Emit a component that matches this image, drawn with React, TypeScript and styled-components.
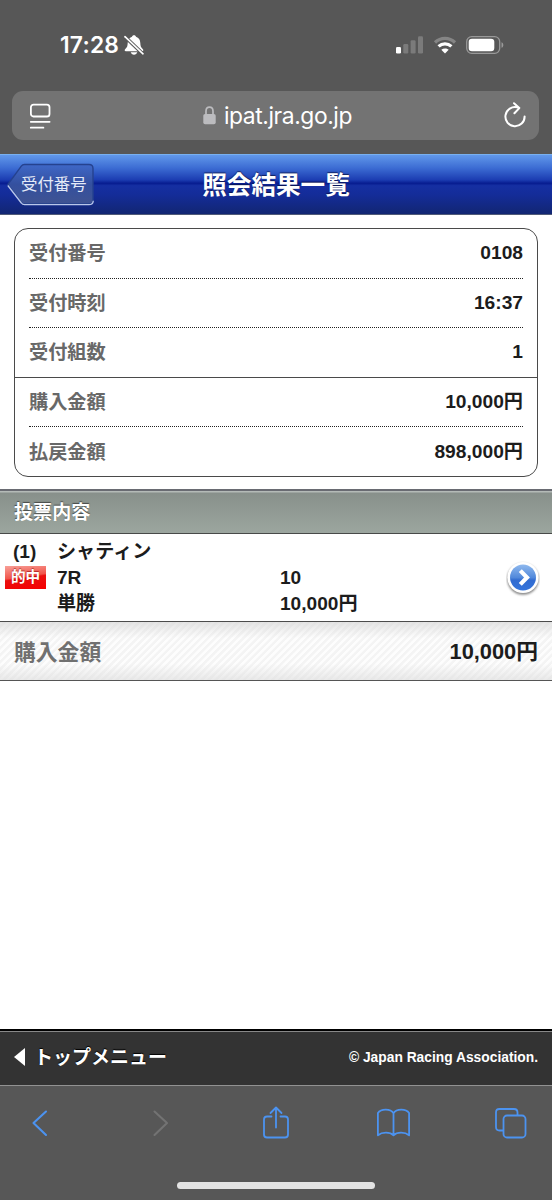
import React from 'react';
import styled, { createGlobalStyle } from 'styled-components';

const GlobalStyle = createGlobalStyle`
  * { box-sizing: border-box; }
  body {
    margin: 0;
    background: #575757;
    color: #1c1c1c;
    font-family: "Liberation Sans", "Noto Sans CJK JP", sans-serif;
    font-weight: 700;
  }
`;

const Screen = styled.div`
  width: 552px;
  height: 1200px;
  display: flex;
  flex-direction: column;
  overflow: hidden;
  background: #575757;
`;

const StatusBar = styled.div`
  height: 91px;
  padding: 0 48px 2px 60px;
  display: flex;
  align-items: center;
  justify-content: space-between;
`;

const StatusGroup = styled.div<{ $gap: number }>`
  display: flex;
  align-items: center;
  gap: ${(p) => p.$gap}px;
`;

const Clock = styled.span`
  font: 600 22.8px/28px Inter, sans-serif;
  letter-spacing: 0.2px;
  color: #fff;
`;

const AddressBar = styled.div`
  height: 49px;
  margin: 0 13px 14px 12px;
  padding: 0 13px 0 17px;
  border-radius: 11px;
  background: #737373;
  display: flex;
  align-items: center;
  justify-content: space-between;
  color: #fff;
`;

const Site = styled.div`
  display: flex;
  align-items: center;
  gap: 8px;
  font: 400 22.8px/30px Inter, sans-serif;
  letter-spacing: -0.4px;
`;

const Header = styled.header`
  height: 61px;
  flex: none;
  display: grid;
  grid-template-columns: 101px 1fr 101px;
  align-items: center;
  border-top: 1px solid #78b0f0;
  border-bottom: 1px solid #505a78;
  background: linear-gradient(#6198ea 0%, #3c6cd3 22%, #1c3db2 42%, #071c90 48%, #152fa2 52%, #142c98 68%, #122672 100%);
`;

const BackButton = styled.button`
  position: relative;
  width: 88px;
  height: 44px;
  margin: 0 0 0 7px;
  padding: 0 0 4px 14px;
  border: 0;
  background: none;
  color: #e4eaf8;
  font: 400 16.4px/20px "Noto Sans CJK JP", sans-serif;
  text-align: left;
  white-space: nowrap;
`;

const BackShape = styled.svg`
  position: absolute;
  inset: 0;
`;

const BackLabel = styled.span`
  position: relative;
`;

const Title = styled.h1`
  margin: 0;
  padding-bottom: 4px;
  font: 700 24.6px/30px "Noto Sans CJK JP", sans-serif;
  text-align: center;
  color: #fff;
  text-shadow: 0 -1px 1px rgba(0, 0, 30, 0.6);
`;

const Page = styled.main`
  flex: 1;
  background: #fff;
`;

const Card = styled.section`
  margin: 13px 14px 12px;
  height: 249px;
  border: 1.4px solid #4a4a4a;
  border-radius: 14px;
  display: flex;
  flex-direction: column;
`;

const CardGroup = styled.dl<{ $rows: number; $divided?: boolean }>`
  margin: 0;
  padding: 0 14px;
  flex: ${(p) => p.$rows};
  display: flex;
  flex-direction: column;
  border-bottom: ${(p) => (p.$divided ? '1px solid #4a4a4a' : '0')};
`;

const CardRow = styled.div`
  flex: 1;
  display: flex;
  align-items: center;
  justify-content: space-between;
  font-size: 19.2px;
  line-height: 28px;
  & + & { border-top: 1px dotted #222; }
`;

const Label = styled.dt`
  padding-top: 2px;
  color: #686868;
`;

const Value = styled.dd`
  margin: 0;
`;

const SectionTitle = styled.h2`
  margin: 0;
  height: 45px;
  padding: 0 14px;
  border-top: 2px solid #696b72;
  border-bottom: 1px solid #484a48;
  background: linear-gradient(#b4bab7 0 1px, #88908b 2px, #9ca69f 100%);
  color: #fff;
  font-size: 19.1px;
  line-height: 44px;
  text-shadow: 0 -1px 1px rgba(40, 40, 40, 0.7);
`;

const BetRow = styled.article`
  height: 88px;
  padding: 4px 12px 4px 5px;
  display: grid;
  grid-template-columns: 52px 223px 1fr 34px;
  align-items: center;
  border-bottom: 1px solid #4c4c4c;
  font-size: 19.1px;
  line-height: 26px;
`;

const BetColumn = styled.div`
  height: 78px;
  display: grid;
  grid-template-rows: repeat(3, 26px);
  white-space: nowrap;
`;

const BetNumber = styled.span`
  padding-left: 8px;
`;

const HitBadge = styled.span`
  margin-top: 1px;
  width: 41px;
  height: 23px;
  color: #fff;
  background: linear-gradient(172deg, #f8a098 0%, #f1544a 46%, #ea1010 52%, #f60000 100%);
  font-size: 14.6px;
  line-height: 22px;
  text-align: center;
  text-shadow: 0 -1px 1px rgba(140, 0, 0, 0.6);
`;

const DetailButton = styled.button`
  width: 34px;
  height: 34px;
  padding: 0;
  border: 0;
  background: none;
  display: flex;
`;

const TotalRow = styled.div`
  height: 59px;
  padding: 2px 14px 0;
  display: flex;
  align-items: center;
  justify-content: space-between;
  border-bottom: 1.4px solid #555;
  background:
    linear-gradient(rgba(215, 215, 215, 0.65), rgba(255, 255, 255, 0) 28%, rgba(255, 255, 255, 0) 72%, rgba(220, 220, 220, 0.6)),
    repeating-linear-gradient(135deg, #fdfdfd 0 2px, #f4f4f4 2.5px 4.5px, #fdfdfd 5px);
  font-size: 21.8px;
  line-height: 30px;
`;

const TotalLabel = styled.span`
  padding-top: 1px;
  color: #707070;
`;

const PageFooter = styled.footer`
  height: 56px;
  flex: none;
  padding: 0 14px;
  display: flex;
  align-items: center;
  justify-content: space-between;
  border-top: 2px solid #000;
  box-shadow: inset 0 1px #888;
  background: #333;
  color: #fff;
`;

const MenuLink = styled.a`
  display: flex;
  align-items: center;
  gap: 9px;
  font-size: 19px;
  line-height: 28px;
  text-shadow: 0 -1px 1px #000;
`;

const MenuMark = styled.svg`
  margin-top: -2px;
`;

const Copyright = styled.small`
  font-size: 13.8px;
  line-height: 20px;
`;

const Toolbar = styled.nav`
  height: 75px;
  flex: none;
  padding: 0 24px;
  border-top: 1px solid #929292;
  display: flex;
  align-items: center;
  justify-content: space-between;
`;

const ToolButton = styled.button<{ $off?: boolean }>`
  width: 34px;
  height: 40px;
  padding: 0;
  border: 0;
  background: none;
  color: ${(p) => (p.$off ? '#737373' : '#4c93f0')};
`;

const HomeArea = styled.div`
  height: 40px;
  flex: none;
  display: flex;
  justify-content: center;
  padding-top: 22px;
`;

const HomeIndicator = styled.div`
  width: 198px;
  height: 7px;
  border-radius: 4px;
  background: #e3e3e3;
`;

const line = { fill: 'none', stroke: 'currentColor', strokeWidth: 1.8, strokeLinecap: 'round', strokeLinejoin: 'round' } as const;

const MutedBell = () => (
  <svg width="20" height="20" viewBox="0 0 20 20">
    <path fill="#fff" d="M10 .3c-1.100 0-1.900.6-2 1.500C5.200 2.700 3.800 4.900 3.700 8c-.1 3.300-.7 4.400-2.400 6-1.100 1.100-.7 2.200.5 2.200h16.400c1.200 0 1.600-1.100.5-2.200-1.700-1.600-2.300-2.700-2.400-6-.1-3.100-1.500-5.300-4.300-6.200C11.900.9 11.100.3 10 .3zM6.700 17.300h6.600c-.5 1.500-1.700 2.400-3.300 2.400s-2.800-.9-3.300-2.400z" />
    <path stroke="#575757" strokeWidth="3.600" d="M.8 1.600 19 19" />
    <path stroke="#fff" strokeWidth="1.600" strokeLinecap="round" d="M1 1.600 19 18.800" />
  </svg>
);

const Signal = () => (
  <svg width="28" height="18" viewBox="0 0 28 18">
    <rect x="0" y="11" width="5" height="6.500" rx="1.300" fill="#fff" />
    <g fill="#7b7b7b">
      <rect x="7.300" y="8" width="5" height="9.500" rx="1.300" />
      <rect x="14.600" y="4.200" width="5" height="13.300" rx="1.300" />
      <rect x="22" y=".3" width="5" height="17.200" rx="1.300" />
    </g>
  </svg>
);

const Wifi = () => (
  <svg width="24" height="18" viewBox="0 0 24 18">
    <path d="M2 6.500C7.700 1 16.300 1 22 6.500" fill="none" stroke="#858585" strokeWidth="3.200" />
    <path d="M5.600 10.400c3.700-3.500 9.100-3.500 12.800 0" fill="none" stroke="#fff" strokeWidth="3.200" />
    <path d="m12 17.600-3.700-3.800c2.200-1.900 5.200-1.900 7.400 0z" fill="#fff" />
  </svg>
);

const Battery = () => (
  <svg width="38" height="18" viewBox="0 0 38 18">
    <rect x=".7" y=".7" width="33" height="16.600" rx="5" fill="none" stroke="#999" strokeWidth="1.300" />
    <rect x="2.700" y="2.700" width="25.600" height="12.600" rx="3.300" fill="#fff" />
    <path d="M35.500 6.200c2.400.7 2.400 4.900 0 5.600z" fill="#999" />
  </svg>
);

const ReaderIcon = () => (
  <svg width="22" height="26" viewBox="0 0 22 26" {...line}>
    <rect x="1.900" y="1.700" width="18.600" height="11.800" rx="2.600" />
    <path d="M1.800 18.800h18.800M1.800 24.700h12.600" />
  </svg>
);

const Lock = () => (
  <svg width="13" height="19" viewBox="0 0 13 19">
    <path d="M3 9V5.300C3 2.900 4.400 1.200 6.500 1.200S10 2.900 10 5.300V9" fill="none" stroke="#bcbcbf" strokeWidth="1.700" />
    <rect x=".3" y="8" width="12.400" height="10.300" rx="1.800" fill="#bcbcbf" />
  </svg>
);

const Reload = () => (
  <svg width="22" height="27" viewBox="0 0 22 27" {...line} strokeWidth={2}>
    <path d="M13.500 5.400A9.600 9.600 0 1 0 20.600 14.400M10 1.200l5.300 4.900-4.900 5.200" />
  </svg>
);

const Arrow = () => (
  <svg width="34" height="36" viewBox="0 0 34 36">
    <defs>
      <linearGradient id="disc" x1="0" y1="0" x2="0" y2="1">
        <stop offset="0" stopColor="#8fb9ee" />
        <stop offset=".5" stopColor="#5289db" />
        <stop offset=".6" stopColor="#316bd0" />
        <stop offset="1" stopColor="#3474dc" />
      </linearGradient>
      <filter id="soft" x="-20%" y="-20%" width="140%" height="140%">
        <feGaussianBlur stdDeviation="1" />
      </filter>
    </defs>
    <circle cx="17" cy="18" r="15.800" fill="#888" filter="url(#soft)" />
    <circle cx="17" cy="16.500" r="15.600" fill="#fff" />
    <circle cx="17" cy="16.500" r="13" fill="url(#disc)" />
    <path d="m14.300 9.600 6.700 6.900-6.700 6.900" fill="none" stroke="#fff" strokeWidth="4.200" />
  </svg>
);

const summary = [
  ['受付番号', '0108'],
  ['受付時刻', '16:37'],
  ['受付組数', '1'],
];
const amounts = [
  ['購入金額', '10,000円'],
  ['払戻金額', '898,000円'],
];

const Rows = ({ items }: { items: string[][] }) => (
  <>
    {items.map(([label, value]) => (
      <CardRow key={label}>
        <Label>{label}</Label>
        <Value>{value}</Value>
      </CardRow>
    ))}
  </>
);

export default function App() {
  return (
    <Screen>
      <GlobalStyle />
      <StatusBar>
        <StatusGroup $gap={5}>
          <Clock>17:28</Clock>
          <MutedBell />
        </StatusGroup>
        <StatusGroup $gap={9}>
          <Signal />
          <Wifi />
          <Battery />
        </StatusGroup>
      </StatusBar>
      <AddressBar>
        <ReaderIcon />
        <Site>
          <Lock />
          <span>ipat.jra.go.jp</span>
        </Site>
        <Reload />
      </AddressBar>

      <Header>
        <BackButton>
          <BackShape width="88" height="44" viewBox="0 0 88 44">
            <defs>
              <linearGradient id="back" x1="0" y1="0" x2="0" y2="1">
                <stop offset="0" stopColor="#3f68c8" />
                <stop offset=".5" stopColor="#34509f" />
                <stop offset="1" stopColor="#3f5392" />
              </linearGradient>
            </defs>
            <path d="M17.500 1.500H82q4 0 4 4V37q0 4-4 4H17.500q-2 0-3.200-1.700L.8 21.500 14.300 3.200q1.200-1.700 3.200-1.700z" fill="url(#back)" stroke="#25428f" strokeWidth="1.400" />
            <path d="M.8 22.500 14.300 40q1.200 1.700 3.200 1.700H82q4 0 4.300-4" fill="none" stroke="#b9c6ea" strokeWidth="1.300" />
          </BackShape>
          <BackLabel>受付番号</BackLabel>
        </BackButton>
        <Title>照会結果一覧</Title>
      </Header>

      <Page>
        <Card>
          <CardGroup $rows={3} $divided>
            <Rows items={summary} />
          </CardGroup>
          <CardGroup $rows={2}>
            <Rows items={amounts} />
          </CardGroup>
        </Card>
        <SectionTitle>投票内容</SectionTitle>
        <BetRow>
          <BetColumn>
            <BetNumber>(1)</BetNumber>
            <HitBadge>的中</HitBadge>
          </BetColumn>
          <BetColumn>
            <span>シャティン</span>
            <span>7R</span>
            <span>単勝</span>
          </BetColumn>
          <BetColumn>
            <span />
            <span>10</span>
            <span>10,000円</span>
          </BetColumn>
          <DetailButton aria-label="詳細">
            <Arrow />
          </DetailButton>
        </BetRow>
        <TotalRow>
          <TotalLabel>購入金額</TotalLabel>
          <span>10,000円</span>
        </TotalRow>
      </Page>

      <PageFooter>
        <MenuLink>
          <MenuMark width="11" height="18" viewBox="0 0 11 18">
            <path d="M11 0v18L0 9z" fill="#fff" />
          </MenuMark>
          トップメニュー
        </MenuLink>
        <Copyright>© Japan Racing Association.</Copyright>
      </PageFooter>

      <Toolbar>
        <ToolButton aria-label="戻る">
          <svg width="34" height="40" viewBox="0 0 34 40" {...line} strokeWidth={2.1}>
            <path d="M22 8.500 9.500 20 22 32" />
          </svg>
        </ToolButton>
        <ToolButton $off aria-label="進む">
          <svg width="34" height="40" viewBox="0 0 34 40" {...line} strokeWidth={2.1}>
            <path d="M12.500 8.500 25 20 12.500 32" />
          </svg>
        </ToolButton>
        <ToolButton aria-label="共有">
          <svg width="34" height="40" viewBox="0 0 34 40" {...line}>
            <path d="M12.500 13.500H8q-3 0-3 3V31.500q0 3 3 3H26q3 0 3-3V16.500q0-3-3-3h-4.500M17 24.500V4.500M11.500 10 17 4.500l5.500 5.500" />
          </svg>
        </ToolButton>
        <ToolButton aria-label="ブックマーク">
          <svg width="34" height="40" viewBox="0 0 34 40" {...line}>
            <path d="M16.500 10.200C13.500 5.600 4 5.600 .9 10V32.300c4.200-3.500 12-3.500 15.600 0 3.600-3.500 11.400-3.500 15.600 0V10C29 5.600 19.500 5.600 16.500 10.200zV32" />
          </svg>
        </ToolButton>
        <ToolButton aria-label="タブ">
          <svg width="34" height="40" viewBox="0 0 34 40" {...line}>
            <path d="M9 27.500H5.500q-3.500 0-3.500-3.500V9.500Q2 6 5.500 6H20q3.500 0 3.500 3.500v2.500" />
            <rect x="9.500" y="12.500" width="22" height="22" rx="3.500" />
          </svg>
        </ToolButton>
      </Toolbar>
      <HomeArea>
        <HomeIndicator />
      </HomeArea>
    </Screen>
  );
}
